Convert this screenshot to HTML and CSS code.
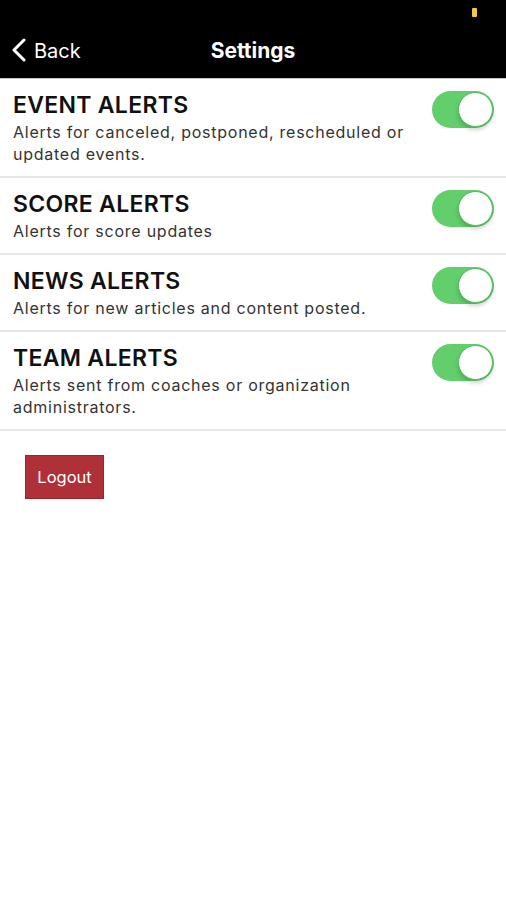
FILE: index.html
```html
<!DOCTYPE html>
<html>
<head>
<meta charset="utf-8">
<link rel="stylesheet" href="styles.css">
</head>
<body>
<header class="top">
  <div class="status"><span class="battery"></span></div>
  <nav class="nav">
    <a class="back">
      <svg class="chev" width="16" height="24" viewBox="0 0 16 24"><path d="M13 2 L3 12 L13 22" fill="none" stroke="#fff" stroke-width="3" stroke-linecap="round" stroke-linejoin="round"/></svg>
      <span>Back</span>
    </a>
    <h1 class="title">Settings</h1>
  </nav>
</header>
<main>
  <ul class="list">
    <li class="row">
      <div class="text">
        <div class="name">EVENT ALERTS</div>
        <div class="desc">Alerts for canceled, postponed, rescheduled or updated events.</div>
      </div>
      <span class="toggle"><span class="knob"></span></span>
    </li>
    <li class="row">
      <div class="text">
        <div class="name">SCORE ALERTS</div>
        <div class="desc">Alerts for score updates</div>
      </div>
      <span class="toggle"><span class="knob"></span></span>
    </li>
    <li class="row">
      <div class="text">
        <div class="name">NEWS ALERTS</div>
        <div class="desc">Alerts for new articles and content posted.</div>
      </div>
      <span class="toggle"><span class="knob"></span></span>
    </li>
    <li class="row">
      <div class="text">
        <div class="name">TEAM ALERTS</div>
        <div class="desc">Alerts sent from coaches or organization administrators.</div>
      </div>
      <span class="toggle"><span class="knob"></span></span>
    </li>
  </ul>
  <div class="actions">
    <button class="logout">Logout</button>
  </div>
</main>
</body>
</html>
```
FILE: styles.css
```css
* { box-sizing: border-box; }
html, body { margin: 0; padding: 0; background: #fff; }
body { font-family: Inter, "Noto Sans", sans-serif; color: #111; width: 506px; height: 900px; }

.top { background: #000; height: 79px; border-bottom: 1px solid #c8c8c8; display: flex; flex-direction: column; }
.status { height: 30px; display: flex; justify-content: flex-end; padding: 8px 29px 0 0; }
.battery { width: 5px; height: 9px; background: #f5c842; border-radius: 1px; }
.nav { flex: 1; display: flex; align-items: center; position: relative; padding: 0 0 8px 11px; }
.back { display: flex; align-items: center; gap: 7px; color: #fff; font-size: 20px; }
.back span { position: relative; top: 1px; }
.chev { display: block; }
.title { position: absolute; left: 0; right: 0; top: 8px; text-align: center; margin: 0; color: #fff; font-size: 21px; font-weight: 700; pointer-events: none; }

.list { list-style: none; margin: 0; padding: 0; }
.row { display: flex; justify-content: space-between; align-items: flex-start; padding: 12px 12px 11px 13px; border-bottom: 2px solid #e6e6e6; }
.text { flex: 1; }
.name { font-size: 23px; font-weight: 600; line-height: 28px; color: #111; letter-spacing: 0.3px; }
.desc { margin-top: 2px; font-size: 16px; line-height: 22px; color: #333; max-width: 410px; letter-spacing: 0.75px; }

.toggle { flex: none; width: 62px; height: 37px; border-radius: 19px; background: #62cf6c; position: relative; }
.knob { position: absolute; right: 1px; top: 1px; width: 35px; height: 35px; border-radius: 50%; background: #fff; border: 1px solid #4fb85a; box-shadow: 0 3px 4px rgba(0,0,0,0.18); }

.actions { padding: 24px 25px; }
.logout { background: #b0303a; border: 1px solid #9c222c; color: #fff; font-family: Inter, sans-serif; font-size: 16.5px; width: 79px; height: 44px; padding: 0; }
```
